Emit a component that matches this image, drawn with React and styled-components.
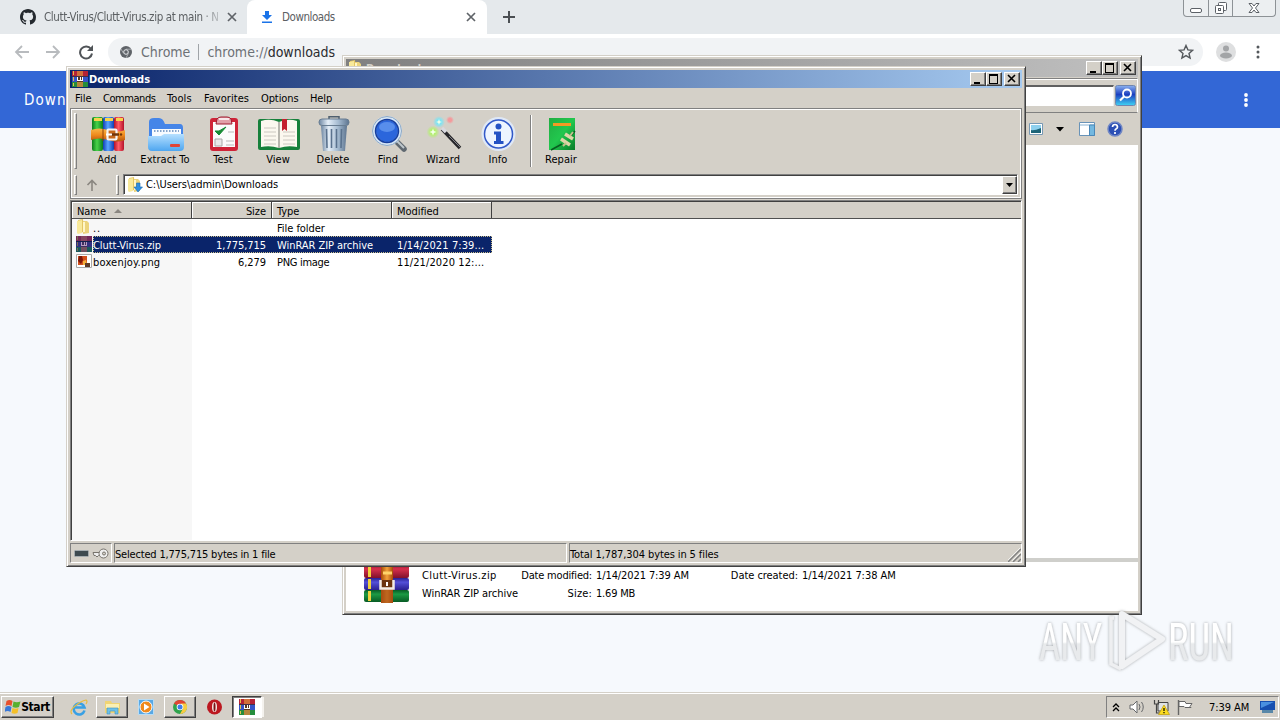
import React from "react";
import styled, { createGlobalStyle, css } from "styled-components";

const FACE = "#d4d0c8";
const TAHOMA = `"DejaVu Sans Condensed", "DejaVu Sans", sans-serif`;

const GlobalStyle = createGlobalStyle`
  * { box-sizing: border-box; }
  body { margin: 0; overflow: hidden; }
  svg { display: block; flex: none; }
`;

const Desktop = styled.div`
  position: relative;
  display: flex;
  flex-direction: column;
  width: 1280px;
  height: 720px;
  overflow: hidden;
  background: #f6f9fd;
  font-family: ${TAHOMA};
  font-stretch: condensed;
  font-size: 11px;
  line-height: 14px;
  letter-spacing: -0.05px;
  color: #000;
  white-space: nowrap;
`;

/* ---------- Chrome ---------- */
const Browser = styled.div`
  display: flex;
  flex-direction: column;
  flex: 1;
`;
const TabStrip = styled.div`
  display: flex;
  height: 34px;
  background: #e5e9ec;
  color: #5c6063;
  font-size: 11.5px;
`;
const Tab = styled.div`
  display: flex;
  align-items: center;
  height: 34px;
  width: ${(p) => p.$w}px;
  padding: 0 0 0 ${(p) => p.$pad}px;
  background: ${(p) => (p.$active ? "#fff" : "transparent")};
  border-radius: 8px 8px 0 0;
`;
const TabTitle = styled.span`
  width: ${(p) => p.$w}px;
  margin-left: ${(p) => p.$gap}px;
  letter-spacing: ${(p) => p.$ls};
  ${(p) => p.$fade && css`
    mask-image: linear-gradient(90deg, #000 88%, transparent 102%);
  `}
`;
const NewTab = styled.div`
  display: flex;
  align-items: center;
  margin-left: 15px;
`;
const ChromeControls = styled.div`
  display: flex;
  margin-left: auto;
  margin-right: 4px;
  width: 93px;
  height: 17px;
  border: 1px solid #8d9296;
  border-top: 0;
  border-radius: 0 0 4px 4px;
  background: #eceff1;
`;
const ChromeControl = styled.div`
  display: flex;
  justify-content: center;
  width: ${(p) => p.$w}px;
  border-right: ${(p) => (p.$last ? 0 : "1px solid #8d9296")};
`;
const NavBar = styled.div`
  display: flex;
  align-items: center;
  height: 37px;
  padding: 0 0 1px 14px;
  background: #fff;
`;
const NavIcons = styled.div`
  display: flex;
  gap: 15px;
  width: 94px;
`;
const Omnibox = styled.div`
  display: flex;
  align-items: center;
  width: 1095px;
  height: 28px;
  padding: 0 9px 0 12px;
  border-radius: 14px;
  background: #f1f3f5;
  color: #6d7175;
  font-size: 14px;
  letter-spacing: 0;
  b { font-weight: 400; color: #2b2c2f; }
`;
const OmniLabel = styled.span`
  margin-left: ${(p) => p.$gap}px;
`;
const OmniRule = styled.span`
  width: 1px;
  height: 16px;
  margin: 0 8px;
  background: #a0a4a8;
`;
const Push = styled.span`
  flex: 1;
`;
const Avatar = styled.div`
  margin: 0 16px 0 13px;
`;
const PageHeader = styled.div`
  display: flex;
  align-items: center;
  justify-content: space-between;
  height: 57px;
  padding: 1px 28px 0 24px;
  background: #3367d6;
  color: #fff;
  font-size: 15px;
  letter-spacing: 1.1px;
`;

/* ---------- Classic windows ---------- */
const Window = styled.div`
  position: absolute;
  left: ${(p) => p.$x}px;
  top: ${(p) => p.$y}px;
  display: flex;
  flex-direction: column;
  width: ${(p) => p.$w}px;
  height: ${(p) => p.$h}px;
  padding: 2px;
  background: ${FACE};
  border: 1px solid;
  border-color: ${FACE} #404040 #404040 ${FACE};
  box-shadow: inset 1px 1px 0 #fff, inset -1px -1px 0 #808080;
`;
const TitleBar = styled.div`
  display: flex;
  align-items: center;
  height: 18px;
  margin: 1px 1px 0;
  padding: 0 2px 0 2px;
  background: linear-gradient(90deg, ${(p) => p.$from}, ${(p) => p.$to});
  color: ${(p) => p.$color || "#fff"};
  font-weight: 700;
  letter-spacing: 0;
`;
const TitleText = styled.span`
  flex: 1;
  margin-left: ${(p) => p.$gap || 1}px;
  padding-top: 1px;
`;
const raised = css`
  border: 1px solid;
  border-color: #fff #404040 #404040 #fff;
  box-shadow: inset -1px -1px 0 #808080;
  background: ${FACE};
`;
const CaptionButton = styled.div`
  display: flex;
  align-items: center;
  justify-content: center;
  width: 16px;
  height: 14px;
  margin-left: ${(p) => p.$gap || 0}px;
  ${raised}
`;

/* ---------- Explorer ---------- */
const AddressBand = styled.div`
  display: flex;
  align-items: center;
  justify-content: flex-end;
  height: 35px;
  margin: 1px 1px 0;
  padding-right: 1px;
  border-top: 1px solid #808080;
  border-bottom: 1px solid #808080;
  border-right: 1px solid #fff;
  box-shadow: inset 0 1px 0 #fff;
`;
const SearchField = styled.div`
  width: 300px;
  height: 21px;
  background: #fff;
  border-top: 2px solid #606060;
  border-right: 1px solid #eee;
`;
const CommandBand = styled.div`
  display: flex;
  align-items: center;
  justify-content: flex-end;
  height: 32px;
  margin: 0 1px;
  padding-right: 15px;
`;
const Spacer = styled.span`
  width: ${(p) => p.$w}px;
`;
const FilePane = styled.div`
  flex: 1;
  margin: 0 1px;
  background: #fff;
`;
const DetailsPane = styled.div`
  display: flex;
  height: 53px;
  margin: 0 1px 1px;
  padding-left: 18px;
  border-top: 4px solid #cfcfcb;
  background: #fff;
`;
const DetailsArt = styled.div`
  margin-top: -3px;
`;
const DetailsGrid = styled.div`
  display: grid;
  grid-template-columns: 91px 83px 134px 72px 120px;
  grid-template-rows: 18px 18px;
  align-content: start;
  line-height: 18px;
  margin: 5px 0 0 12px;
`;
const Detail = styled.span`
  padding-right: ${(p) => (p.$right ? 4 : 0)}px;
  text-align: ${(p) => (p.$right ? "right" : "left")};
  letter-spacing: ${(p) => (p.$ls === undefined ? -0.05 : p.$ls)}px;
`;

/* ---------- WinRAR ---------- */
const MenuBar = styled.div`
  display: flex;
  align-items: center;
  height: 20px;
  margin: 0 1px;
  padding: 2px 0 0 5px;
`;
const MenuItem = styled.span`
  width: ${(p) => p.$w}px;
  letter-spacing: ${(p) => p.$ls}px;
`;
const Rebar = styled.div`
  display: flex;
  flex-direction: column;
  height: 91px;
  margin: 0 1px;
  border: 1px solid #808080;
  box-shadow: inset 1px 1px 0 #fff, inset -1px -1px 0 #fff;
`;
const ToolBand = styled.div`
  display: flex;
  align-items: center;
  height: 63px;
  padding-left: 3px;
`;
const Grip = styled.span`
  width: 3px;
  height: ${(p) => p.$h}px;
  border: 1px solid;
  border-color: #fff #808080 #808080 #fff;
`;
const Tool = styled.div`
  display: flex;
  flex-direction: column;
  align-items: center;
  width: ${(p) => p.$w}px;
  height: 54px;
  padding-top: 2px;
  letter-spacing: 0.05px;
  svg { margin: 0 0 1px 2px; }
`;
const ToolRule = styled.span`
  width: 2px;
  height: 52px;
  margin: 0 0 0 4px;
  border-left: 1px solid #808080;
  border-right: 1px solid #fff;
`;
const PathBand = styled.div`
  display: flex;
  align-items: center;
  height: 24px;
  padding: 1px 3px 0;
`;
const PathCombo = styled.div`
  display: flex;
  align-items: center;
  flex: 1;
  height: 21px;
  margin-left: 4px;
  padding: 0 0 0 3px;
  background: #fff;
  border: 1px solid #808080;
  border-right-color: #fff;
  border-bottom-color: #fff;
  box-shadow: inset 1px 1px 0 #404040;
`;
const PathText = styled.span`
  flex: 1;
  margin-left: 3px;
  padding-top: 1px;
`;
const ComboButton = styled.div`
  display: flex;
  align-items: center;
  justify-content: center;
  width: 15px;
  height: 18px;
  ${raised}
`;
const FileList = styled.div`
  display: flex;
  flex-direction: column;
  flex: 1;
  margin: 1px 1px 0;
  border: 1px solid;
  border-color: #808080 #fff #fff #808080;
  box-shadow: inset 1px 1px 0 #404040;
  padding: 1px 0 0 1px;
  background: #fff;
`;
const HeaderRow = styled.div`
  display: flex;
  height: 17px;
  background: ${FACE};
  border-bottom: 1px solid #505050;
`;
const HeaderCell = styled.div`
  display: flex;
  align-items: center;
  justify-content: ${(p) => (p.$right ? "flex-end" : "flex-start")};
  width: ${(p) => p.$w}px;
  padding: 2px 5px 0;
  line-height: 15px;
  border-right: 1px solid #404040;
  box-shadow: inset 1px 1px 0 #fff;
`;
const ListBody = styled.div`
  flex: 1;
  background: linear-gradient(90deg, #f7f7f7 120px, #fff 120px);
`;
const Row = styled.div`
  display: flex;
  height: 17px;
  padding-left: 4px;
`;
const Cells = styled.div`
  display: flex;
  align-items: center;
  height: 17px;
  width: 399px;
  margin-left: 1px;
  padding-top: 2px;
  ${(p) => p.$selected && css`
    background: #0a246a;
    color: #fff;
    outline: 1px dotted #c8bc88;
    outline-offset: -1px;
  `}
`;
const Cell = styled.span`
  width: ${(p) => p.$w}px;
  padding-left: ${(p) => p.$pad || 0}px;
  text-align: ${(p) => (p.$right ? "right" : "left")};
  letter-spacing: ${(p) => p.$ls || "inherit"};
`;
const StatusBar = styled.div`
  display: flex;
  gap: 2px;
  height: 20px;
  margin: 2px 1px 1px;
`;
const StatusCell = styled.div`
  display: flex;
  align-items: center;
  width: ${(p) => p.$w}px;
  flex: ${(p) => (p.$grow ? 1 : "none")};
  padding: ${(p) => p.$top || 0}px 0 0 ${(p) => p.$pad || 0}px;
  gap: 3px;
  letter-spacing: ${(p) => p.$ls || "inherit"};
  border: 1px solid;
  border-color: #808080 #fff #fff #808080;
`;
const StatusText = styled.span`
  padding-top: 3px;
`;
const SizeGrip = styled.span`
  padding-top: 3px;
`;

/* ---------- Taskbar ---------- */
const Taskbar = styled.div`
  display: flex;
  align-items: center;
  height: 28px;
  padding: 2px 1px 0 1px;
  background: ${FACE};
  box-shadow: inset 0 1px 0 #d4d0c8, inset 0 2px 0 #fff;
`;
const TaskButton = styled.div`
  display: flex;
  align-items: center;
  justify-content: center;
  width: ${(p) => p.$w}px;
  height: 22px;
  margin-left: ${(p) => p.$gap || 0}px;
  font-size: 12px;
  font-weight: 700;
  letter-spacing: -0.4px;
  ${(p) => !p.$flat && raised}
  ${(p) => p.$pressed && css`
    background: #fff;
    border-color: #404040 #fff #fff #404040;
    box-shadow: inset 1px 1px 0 #808080, 3px 0 0 -1px #f4f2ee;
  `}
`;
const Tray = styled.div`
  display: flex;
  align-items: center;
  width: 173px;
  height: 22px;
  margin-left: auto;
  padding-left: 5px;
  border: 1px solid;
  border-color: #808080 #fff #fff #808080;
`;
const Clock = styled.span`
  width: 51px;
  margin-left: 15px;
  padding-top: 1px;
`;
const Watermark = styled.div`
  position: absolute;
  left: 1030px;
  top: 602px;
`;

/* ---------- Drawings ---------- */
const MinGlyph = () => (
  <svg width="12" height="10" shapeRendering="crispEdges"><path d="M2 8h6v2H2z" /></svg>
);
const MaxGlyph = () => (
  <svg width="12" height="10" shapeRendering="crispEdges">
    <path d="M1 0h9v10H1zM2 2v7h7V2z" fillRule="evenodd" />
  </svg>
);
const CloseGlyph = () => (
  <svg width="12" height="10"><path d="M2 1l7 7M9 1l-7 7" stroke="#000" strokeWidth="1.6" /></svg>
);
const Captions = () => (
  <>
    <CaptionButton><MinGlyph /></CaptionButton>
    <CaptionButton><MaxGlyph /></CaptionButton>
    <CaptionButton $gap={2}><CloseGlyph /></CaptionButton>
  </>
);
const RarSmall = ({ dim, size = 16 }) => (
  <svg width={size} height={size} viewBox="0 0 16 16" shapeRendering="crispEdges">
    <path fill={dim ? "#742858" : "#b52236"} d="M0 0h16v5H0z" />
    <path fill={dim ? "#333080" : "#3554c8"} d="M0 5.5h16v5H0z" />
    <path fill={dim ? "#185a5c" : "#258d3c"} d="M0 11h16v5H0z" />
    <path fill={dim ? "#7a6a50" : "#e4c050"} d="M1 0h1v4H1zM1 6h1v4H1zM1 12h1v3H1z" />
    <path fill={dim ? "#8a4c62" : "#d8843c"} d="M5 0h6v16H5z" opacity=".8" />
    <path fill={dim ? "#403060" : "#59361f"} d="M5 5h6v6H5z" />
    <path fill="none" stroke={dim ? "#b69cc0" : "#fff"} d="M5.5 5.5v4h5v-4M8 6v3" />
    <path fill={dim ? "#10204e" : "#41314a"} d="M0 5h16v.7H0zM0 10.5h16v.7H0z" />
  </svg>
);
const FolderSmall = ({ arrow }) => (
  <svg width="16" height="16" viewBox="0 0 16 16">
    <path fill="#e4c664" d="M2 1l5-1 1 13-6 1z" />
    <path fill="#f8e99a" d="M1 2l5-1v13l-4 1-1-1z" />
    <path fill="#ecd47c" d="M7 2h4l2 2v10l-6 1z" />
    <path fill="#fff6c8" d="M7 3h2v10H7z" />
    {arrow && <path fill="#2d8ee0" stroke="#1769b0" strokeWidth=".6" d="M9.500 6h3.500v4h2.500l-4.500 5-4-5h2.500z" />}
  </svg>
);
const AddIcon = () => (
  <svg width="36" height="36" viewBox="0 0 36 36">
    <defs>
      {[["ag", "#0b7d1b", "#48d34a"], ["ab", "#123fb4", "#58a6ff"], ["ar", "#b5122a", "#ff5d68"]].map(([id, a, b]) => (
        <linearGradient id={id} key={id}>
          <stop stopColor={a} /><stop offset=".45" stopColor={b} /><stop offset="1" stopColor={a} />
        </linearGradient>
      ))}
      <linearGradient id="belt" x2="0" y2="1">
        <stop stopColor="#f9b648" /><stop offset=".5" stopColor="#f08a1c" /><stop offset="1" stopColor="#b5540c" />
      </linearGradient>
    </defs>
    <rect x="2" y="1" width="11" height="34" rx="2" fill="url(#ag)" />
    <rect x="13" y="1" width="11" height="34" rx="2" fill="url(#ab)" />
    <rect x="24" y="1" width="10" height="34" rx="2" fill="url(#ar)" />
    <path d="M4 2h8v3H4zM15 2h8v3h-8zM26 2h7v3h-7z" fill="#f7d44c" />
    <path d="M1 14q8-3 17 0t17 0v10q-8 3-17 0t-17 0z" fill="url(#belt)" />
    <path d="M13 13v12" stroke="#8c4008" />
    <rect x="17.500" y="13.500" width="9" height="10" rx="1" fill="#c8681c" stroke="#f5f5f5" strokeWidth="2.200" />
    <path d="M21 18.500h8" stroke="#70350a" strokeWidth="2.500" />
    <path d="M16 18.500h6" stroke="#fff" strokeWidth="2" />
    <circle cx="31" cy="18.500" r="1.200" fill="#70350a" />
  </svg>
);
const ExtractIcon = () => (
  <svg width="38" height="36" viewBox="0 0 38 36">
    <defs><linearGradient id="fold" x2="0" y2="1"><stop stopColor="#b6e0ff" /><stop offset="1" stopColor="#4ea6f0" /></linearGradient></defs>
    <path d="M2 6q0-4 5-4h5q4 0 6 6h15q3 0 3 4v16H2z" fill="#4585e8" />
    <path d="M5 13h29v11H5z" fill="#f7fbff" />
    <path d="M7 15h25" stroke="#84a4cc" strokeWidth="2" strokeDasharray="1.5 1.5" />
    <path d="M1 20h13l3-2h20v13q0 4-4 4H5q-4 0-4-4z" fill="url(#fold)" />
    <rect x="23" y="28" width="10" height="3" rx="1" fill="#e04438" />
  </svg>
);
const TestIcon = () => (
  <svg width="30" height="36" viewBox="0 0 30 36">
    <rect x="1" y="2" width="28" height="33" rx="3" fill="#cf2438" />
    <path d="M4 6h22v25H4z" fill="#fbfbfb" />
    <path d="M8 3q1-2 4-2h6q3 0 4 2l1 5H7z" fill="#e2a0a8" stroke="#a01c30" />
    <path d="M10 3h10" stroke="#fff" strokeWidth="1.5" />
    <path d="M6 15l4 4 7-8-7 4z" fill="#168a34" stroke="#168a34" />
    <path d="M19 16h6M17 25h8M17 29h8" stroke="#b9b9b9" />
    <path d="M6 23h7v7H6z" fill="#e9e9e9" stroke="#a9a9a9" />
  </svg>
);
const ViewIcon = () => (
  <svg width="44" height="36" viewBox="0 0 44 36">
    <rect x="1" y="3" width="42" height="31" rx="2" fill="#16803b" />
    <path d="M4 5q9-3 18 1v26q-9-3-18-1zM40 5q-9-3-18 1v26q9-3 18-1z" fill="#fbf8ef" />
    <path d="M22 6v26" stroke="#9b9b93" strokeWidth="1.4" />
    <path d="M7 12h12M7 16h12M7 20h12M7 24h12M7 28h12M26 16h12M26 20h12M26 24h12M26 28h12" stroke="#cbc8c0" />
    <path d="M25 3h5v12l-2.500-2-2.500 2z" fill="#c4202e" />
  </svg>
);
const DeleteIcon = () => (
  <svg width="32" height="36" viewBox="0 0 32 36">
    <defs><linearGradient id="can"><stop stopColor="#6d86a2" /><stop offset=".3" stopColor="#e4eef8" /><stop offset=".65" stopColor="#a4bad0" /><stop offset="1" stopColor="#5d748f" /></linearGradient></defs>
    <path d="M11 3V.800h10V3" fill="none" stroke="#50606f" strokeWidth="1.500" />
    <path d="M3 10h26l-2 25H5z" fill="url(#can)" />
    <path d="M8.500 13l.5 19M13.500 13v19M18.500 13v19M23.500 13l-.5 19" stroke="#5a728e" strokeWidth="1.600" />
    <rect x="1" y="3" width="30" height="6.500" rx="3" fill="url(#can)" stroke="#687d92" />
  </svg>
);
const FindIcon = () => (
  <svg width="36" height="36" viewBox="0 0 36 36">
    <path d="M25 25l8 8" stroke="#5f6870" strokeWidth="5.500" strokeLinecap="round" />
    <path d="M26 25l7 7" stroke="#bfc7cc" strokeWidth="2" />
    <circle cx="16" cy="15" r="13" fill="#2b66dc" stroke="#d5e5f5" strokeWidth="4" />
    <circle cx="16" cy="15" r="14.500" fill="none" stroke="#8da8c4" />
    <circle cx="16" cy="15" r="11.500" fill="none" stroke="#163e9d" strokeWidth="1.500" />
    <ellipse cx="16" cy="11" rx="8" ry="5" fill="#85b5fb" opacity=".5" />
  </svg>
);
const WizardIcon = () => (
  <svg width="38" height="36" viewBox="0 0 38 36">
    <defs>
      {[["wg", "#b4f070"], ["wc", "#7ce4f4"], ["wr", "#f49a9c"]].map(([id, c]) => (
        <radialGradient id={id} key={id}><stop stopColor={c} /><stop offset=".4" stopColor={c} /><stop offset="1" stopColor={c} stopOpacity="0" /></radialGradient>
      ))}
    </defs>
    <path d="M17 13l18 19" stroke="#26262a" strokeWidth="3.500" />
    <path d="M17 12l4 4" stroke="#d9d9df" strokeWidth="3.500" />
    <path d="M24 20l11 11" stroke="#85858b" />
    <circle cx="8" cy="16" r="6.500" fill="url(#wg)" />
    <circle cx="14" cy="6" r="6" fill="url(#wc)" />
    <circle cx="25" cy="4" r="4" fill="url(#wr)" />
    <path d="M8 12.500l1 2.500 2.500 1L9 17l-1 2.500L7 17l-2.500-1L7 15zM14 3l.8 2.200L17 6l-2.200.800L14 9l-.8-2.200L11 6l2.200-.8z" fill="#f2ffe8" />
  </svg>
);
const InfoIcon = () => (
  <svg width="36" height="36" viewBox="0 0 36 36">
    <circle cx="17.500" cy="18" r="17" fill="#dfe8f6" />
    <circle cx="17.500" cy="18" r="14" fill="#edf4ff" stroke="#3158c8" strokeWidth="1.500" />
    <circle cx="17.500" cy="10.500" r="3" fill="#2452c4" />
    <path d="M13 15.500h7V25h2.500v3H13v-3h2v-6.500h-2z" fill="#2452c4" />
  </svg>
);
const RepairIcon = () => (
  <svg width="28" height="36" viewBox="0 0 28 36">
    <defs><linearGradient id="rep" x2="1" y2="1"><stop stopColor="#20ad42" /><stop offset=".5" stopColor="#22c74e" /><stop offset="1" stopColor="#087b28" /></linearGradient></defs>
    <path d="M1 2h26v32H1z" fill="url(#rep)" />
    <path d="M5 8.500h18" stroke="#f39a24" strokeWidth="3" />
    <path d="M3 34l11-6M22 21l5-6" stroke="#075c20" strokeWidth="1.500" />
    <path d="M13 23l9 6M17 18l8 5" stroke="#ddd6a8" strokeWidth="3.500" />
    <path d="M15 30l3-3M22 20l3-4" stroke="#c4c08c" strokeWidth="2" />
  </svg>
);
const BooksIcon = () => (
  <svg width="46" height="45" viewBox="0 0 46 45">
    <defs>
      {[["hr", "#d8304c", "#80102c"], ["hb", "#5450d8", "#2a1f90"], ["hg", "#1c9a44", "#085c25"]].map(([id, a, b]) => (
        <linearGradient id={id} key={id} x2="0" y2="1"><stop stopColor={b} /><stop offset=".35" stopColor={a} /><stop offset="1" stopColor={b} /></linearGradient>
      ))}
      <linearGradient id="strap"><stop stopColor="#a84a08" /><stop offset=".5" stopColor="#f3a33c" /><stop offset="1" stopColor="#a84a08" /></linearGradient>
    </defs>
    <rect x="0" y="5" width="45" height="14" rx="2" fill="url(#hr)" />
    <rect x="0" y="19" width="45" height="12" rx="2" fill="url(#hb)" />
    <rect x="0" y="31" width="45" height="12" rx="2" fill="url(#hg)" />
    <path d="M5.500 6v12M5.500 20v10M5.500 32v10" stroke="#f1d23c" strokeWidth="3" />
    <path d="M17 3h12v41H17z" fill="url(#strap)" />
    <path d="M17 30h12v14H17z" fill="#a84e14" opacity=".7" />
    <path d="M16.500 21v8.500h13V21" fill="#6b3410" stroke="#f2ece6" strokeWidth="2.500" />
    <path d="M23 23v4" stroke="#fff" strokeWidth="2" />
    <path d="M19 14h9" stroke="#ffd46a" strokeWidth="3" />
  </svg>
);
const ImageSmall = () => (
  <svg width="16" height="16" viewBox="0 0 16 16">
    <path d="M.5 1.500h15v13H.5z" fill="#fff" stroke="#a9a9a9" />
    <path d="M2 3h9v9H2z" fill="#d4501c" />
    <path d="M3 3h3l1 4-2 4-3-3z" fill="#7d1608" /><path d="M7 8l3-1 1 5H7z" fill="#f3b03a" />
    <path d="M9 10h5v4H9z" fill="#5c3a28" />
  </svg>
);
const GithubLogo = () => (
  <svg width="16" height="16" viewBox="0 0 16 16">
    <path fill="#24292e" d="M8 0C3.580 0 0 3.580 0 8c0 3.540 2.290 6.530 5.470 7.590.4.070.55-.17.55-.38 0-.19-.01-.82-.01-1.490-2.010.37-2.530-.49-2.690-.94-.09-.23-.48-.94-.82-1.130-.28-.15-.68-.52-.01-.53.63-.01 1.080.58 1.230.82.72 1.210 1.870.87 2.330.66.07-.52.28-.87.51-1.070-1.780-.2-3.640-.89-3.640-3.950 0-.87.31-1.590.82-2.150-.08-.2-.36-1.020.08-2.120 0 0 .67-.21 2.200.82.64-.18 1.320-.27 2-.27s1.360.09 2 .27c1.530-1.040 2.200-.82 2.200-.82.44 1.100.16 1.920.08 2.120.51.56.82 1.270.82 2.150 0 3.070-1.870 3.750-3.650 3.950.29.25.54.73.54 1.480 0 1.070-.01 1.930-.01 2.200 0 .21.15.46.55.38A8.010 8.010 0 0 0 16 8c0-4.420-3.580-8-8-8z" />
  </svg>
);
const TabClose = () => (
  <svg width="10" height="10" viewBox="0 0 10 10"><path d="M1 1l8 8M9 1L1 9" stroke="#5f6368" strokeWidth="1.7" /></svg>
);
const Dots = ({ color, r = 1.5 }) => (
  <svg width="12" height="16" viewBox="0 0 12 16" fill={color}>
    <circle cx="6" cy="3" r={r} /><circle cx="6" cy="8" r={r} /><circle cx="6" cy="13" r={r} />
  </svg>
);

const tools = [
  ["Add", 54, AddIcon], ["Extract To", 62, ExtractIcon], ["Test", 54, TestIcon], ["View", 56, ViewIcon],
  ["Delete", 54, DeleteIcon], ["Find", 56, FindIcon], ["Wizard", 54, WizardIcon], ["Info", 56, InfoIcon],
];
const menus = [["File", 28, 0], ["Commands", 64, -0.45], ["Tools", 37, 0.1], ["Favorites", 57, 0.05], ["Options", 49, -0.1], ["Help", 30, -0.1]];
const files = [
  { icon: <FolderSmall />, name: "..", size: "", type: "File folder", date: "", nameLs: "0.8px" },
  { icon: <RarSmall dim />, name: "Clutt-Virus.zip", size: "1,775,715", type: "WinRAR ZIP archive", date: "1/14/2021 7:39...", selected: true },
  { icon: <ImageSmall />, name: "boxenjoy.png", size: "6,279", type: "PNG image", date: "11/21/2020 12:...", nameLs: "0.2px", typeLs: "-0.3px" },
];

function BrowserWindow() {
  return (
    <Browser>
      <TabStrip>
        <Tab $w={247} $pad={20}>
          <GithubLogo />
          <TabTitle $w={178} $gap={8} $ls="-0.38px" $fade>Clutt-Virus/Clutt-Virus.zip at main · N</TabTitle>
          <Spacer $w={5} />
          <TabClose />
        </Tab>
        <Tab $w={240} $pad={14} $active>
          <svg width="12" height="14" viewBox="0 0 12 14"><path d="M4 1h4v4h3L6 10 1 5h3zM1 11.500h10V13H1z" fill="#1a73e8" /></svg>
          <TabTitle $w={178} $gap={9} $ls="-0.45px">Downloads</TabTitle>
          <Spacer $w={6} />
          <TabClose />
        </Tab>
        <NewTab>
          <svg width="14" height="14" viewBox="0 0 14 14"><path d="M7 1v12M1 7h12" stroke="#4b4f53" strokeWidth="2" /></svg>
        </NewTab>
        <ChromeControls>
          <ChromeControl $w={25}><svg width="14" height="16"><rect x="1.500" y="8.500" width="11" height="4" rx="1.500" fill="#fff" stroke="#5c6167" /></svg></ChromeControl>
          <ChromeControl $w={25}><svg width="14" height="16" fill="#fff" stroke="#5c6167"><rect x="4.500" y="2.500" width="8" height="8" rx="1" /><rect x="1.500" y="5.500" width="8" height="8" rx="1" /><rect x="4.500" y="8.500" width="2" height="2" /></svg></ChromeControl>
          <ChromeControl $w={42} $last><svg width="14" height="16"><path d="M2 3.500h3l2 2.500 2-2.500h3L8.500 8l3.500 4.500H9L7 10l-2 2.500H2L5.500 8z" fill="#fff" stroke="#5c6167" /></svg></ChromeControl>
        </ChromeControls>
      </TabStrip>
      <NavBar>
        <NavIcons>
          <svg width="16" height="16" viewBox="0 0 16 16" fill="none" stroke="#b8bbbe" strokeWidth="1.800"><path d="M15 8H2M8 2L2 8l6 6" /></svg>
          <svg width="16" height="16" viewBox="0 0 16 16" fill="none" stroke="#b8bbbe" strokeWidth="1.800"><path d="M1 8h13M8 2l6 6-6 6" /></svg>
          <svg width="18" height="16" viewBox="-1 0 18 16"><path d="M14 5A6 6 0 1 0 15 9.500" fill="none" stroke="#505458" strokeWidth="2" /><path d="M16 1v6h-6z" fill="#505458" /></svg>
        </NavIcons>
        <Omnibox>
          <svg width="12" height="12" viewBox="0 0 12 12"><circle cx="6" cy="6" r="6" fill="#5f6368" /><circle cx="6" cy="6" r="2.300" fill="#5f6368" stroke="#e8eaed" strokeWidth="1" /><path d="M6 3.200h5.200M3.500 7.300L1 3M8.400 7.400L6 12" stroke="#c8cbce" strokeWidth=".7" /></svg>
          <OmniLabel $gap={9}>Chrome</OmniLabel>
          <OmniRule />
          <OmniLabel>chrome://<b>downloads</b></OmniLabel>
          <Push />
          <svg width="16" height="16" viewBox="0 0 16 16"><path d="M8 1.500l1.900 4.400 4.700.4-3.600 3.100 1.100 4.700L8 11.600l-4.100 2.500L5 9.400 1.400 6.300l4.700-.4z" fill="none" stroke="#54585c" strokeWidth="1.400" /></svg>
        </Omnibox>
        <Avatar>
          <svg width="20" height="20" viewBox="0 0 20 20"><circle cx="10" cy="10" r="10" fill="#dedfe0" /><circle cx="10" cy="6.500" r="3" fill="#a3a5a7" /><ellipse cx="10" cy="13.500" rx="6" ry="3" fill="#a3a5a7" /></svg>
        </Avatar>
        <Dots color="#54585c" />
      </NavBar>
      <PageHeader>
        Downloads
        <Dots color="#fff" r={1.9} />
      </PageHeader>
    </Browser>
  );
}

function ExplorerWindow() {
  return (
    <Window $x={342} $y={55} $w={800} $h={560}>
      <TitleBar $from="#808080" $to="#c0c0c0" $color="#d4d0c8">
        <FolderSmall />
        <TitleText $gap={2}>Downloads</TitleText>
        <Captions />
      </TitleBar>
      <AddressBand>
        <SearchField />
        <Spacer $w={1} />
        <svg width="21" height="21" viewBox="0 0 21 21">
          <defs><linearGradient id="sb" x2="0" y2="1"><stop stopColor="#8cb2f0" /><stop offset=".45" stopColor="#1c3fc0" /><stop offset="1" stopColor="#40d4f4" /></linearGradient></defs>
          <rect x=".5" y=".5" width="20" height="20" rx="2" fill="url(#sb)" stroke="#7086b0" />
          <circle cx="12" cy="8.500" r="4" fill="none" stroke="#fff" strokeWidth="1.800" /><path d="M9 11.500L5 15.500" stroke="#fff" strokeWidth="2.200" />
        </svg>
      </AddressBand>
      <CommandBand>
        <svg width="14" height="12" viewBox="0 0 14 12"><path d="M.5.5h13v11H.5z" fill="#fff" stroke="#7798b4" /><path d="M2 2h10v8H2z" fill="#8ed0ee" /><path d="M2 7q3 1 10-2v5H2z" fill="#1c6478" /></svg>
        <Spacer $w={13} />
        <svg width="8" height="5"><path d="M0 0h8L4 4.500z" /></svg>
        <Spacer $w={15} />
        <svg width="16" height="14" viewBox="0 0 16 14"><path d="M.5.5h15v13H.5z" fill="#fff" stroke="#6993b8" /><path d="M1 3h14" stroke="#8ab2d2" /><path d="M10.500 3h5v10.500h-5z" fill="#73b8e0" stroke="#4a88b8" /></svg>
        <Spacer $w={12} />
        <svg width="16" height="16" viewBox="0 0 16 16"><circle cx="8" cy="8" r="7" fill="#2b4fb5" stroke="#6f86c4" strokeWidth="1.500" /><path d="M5.500 6q.2-2.500 2.500-2.500T10.500 6q0 1.300-1.500 2-1 .5-1 1.800M8 11v2" fill="none" stroke="#fff" strokeWidth="1.700" /></svg>
      </CommandBand>
      <FilePane />
      <DetailsPane>
        <DetailsArt><BooksIcon /></DetailsArt>
        <DetailsGrid>
          <Detail $ls={0.4}>Clutt-Virus.zip</Detail>
          <Detail $right $ls={-0.2}>Date modified:</Detail>
          <Detail $ls={-0.1}>1/14/2021 7:39 AM</Detail>
          <Detail $right>Date created:</Detail>
          <Detail>1/14/2021 7:38 AM</Detail>
          <Detail>WinRAR ZIP archive</Detail>
          <Detail $right $ls={0.15}>Size:</Detail>
          <Detail $ls={-0.2}>1.69 MB</Detail>
        </DetailsGrid>
      </DetailsPane>
    </Window>
  );
}

function WinRarWindow() {
  return (
    <Window $x={66} $y={66} $w={960} $h={501}>
      <TitleBar $from="#0a246a" $to="#a6caf0">
        <RarSmall />
        <TitleText>Downloads</TitleText>
        <Captions />
      </TitleBar>
      <MenuBar>{menus.map(([m, w, ls]) => <MenuItem key={m} $w={w} $ls={ls}>{m}</MenuItem>)}</MenuBar>
      <Rebar>
        <ToolBand>
          <Grip $h={56} />
          <Spacer $w={3} />
          {tools.map(([label, w, Icon]) => (
            <Tool key={label} $w={w}><Icon />{label}</Tool>
          ))}
          <ToolRule />
          <Tool $w={58}><RepairIcon />Repair</Tool>
        </ToolBand>
        <PathBand>
          <Grip $h={20} />
          <Spacer $w={9} />
          <svg width="12" height="12" viewBox="0 0 12 12"><path d="M6 12V2M1.500 6L6 1.500 10.500 6" fill="none" stroke="#8a8680" strokeWidth="1.600" /></svg>
          <Spacer $w={18} />
          <Grip $h={20} />
          <PathCombo>
            <FolderSmall arrow />
            <PathText>C:\Users\admin\Downloads</PathText>
            <ComboButton><svg width="7" height="4"><path d="M0 0h7L3.500 4z" /></svg></ComboButton>
          </PathCombo>
        </PathBand>
      </Rebar>
      <FileList>
        <HeaderRow>
          <HeaderCell $w={120}>Name<Spacer $w={8} /><svg width="8" height="4"><path d="M0 4h8L4 0z" fill="#8a8680" /></svg></HeaderCell>
          <HeaderCell $w={80} $right>Size</HeaderCell>
          <HeaderCell $w={120}>Type</HeaderCell>
          <HeaderCell $w={100}>Modified</HeaderCell>
        </HeaderRow>
        <ListBody>
          {files.map((f) => (
            <Row key={f.name}>
              {f.icon}
              <Cells $selected={f.selected}>
                <Cell $w={99} $ls={f.nameLs}>{f.name}</Cell>
                <Cell $w={74} $right>{f.size}</Cell>
                <Cell $w={131} $pad={11} $ls={f.typeLs}>{f.type}</Cell>
                <Cell $w={90} $ls="0.1px">{f.date}</Cell>
              </Cells>
            </Row>
          ))}
        </ListBody>
      </FileList>
      <StatusBar>
        <StatusCell $w={42} $pad={3} $top={1}>
          <svg width="15" height="7"><rect x=".5" y=".5" width="14" height="6" rx="1" fill="#3d4a50" stroke="#a4acb0" /></svg>
          <svg width="17" height="11" viewBox="0 0 17 11" fill="#eee" stroke="#77736c"><path d="M1 4.500h8v3H6.500L5 9 3.500 7.500H2z" /><circle cx="11.500" cy="5.500" r="4.500" /><circle cx="12" cy="5.500" r="1.500" fill="#d4d0c8" /></svg>
        </StatusCell>
        <StatusCell $w={453} $ls="-0.18px">
          <StatusText>Selected 1,775,715 bytes in 1 file</StatusText>
        </StatusCell>
        <StatusCell $grow $ls="-0.1px">
          <StatusText>Total 1,787,304 bytes in 5 files</StatusText>
          <Push />
          <SizeGrip>
            <svg width="13" height="15" viewBox="0 0 13 15"><path d="M0 15L13 2M5 15l8-8M10 15l3-3" stroke="#808080" strokeWidth="1.500" /><path d="M-1 14L12 1M4 14l9-9" stroke="#fff" strokeWidth=".7" /></svg>
          </SizeGrip>
        </StatusCell>
      </StatusBar>
    </Window>
  );
}

function TaskbarStrip() {
  return (
    <Taskbar>
      <TaskButton $w={53}>
        <svg width="16" height="16" viewBox="1.500 0 16 16"><path d="M3 2q3-2 6 0L8 7Q5 5 2 7z" fill="#e8502c" /><path d="M10 2.500q3 1.500 7 0L15.500 8q-3 1.500-6.500 0z" fill="#58b030" /><path d="M2 8q3-2 6 0l-1 5q-3-2-6 0z" fill="#3878d8" /><path d="M9 9q3 1.500 6 0l-1 5q-3 1.500-6 0z" fill="#f4c028" /></svg>
        Start
      </TaskButton>
      <TaskButton $flat $w={24} $gap={13}>
        <svg width="18" height="18" viewBox="0 0 18 18"><path d="M14.500 12.500A5.500 5.500 0 1 1 14.500 9.500H5" fill="none" stroke="#38a0e4" strokeWidth="2.600" /><path d="M2 16Q-1 13 5 8T16 2q2 1 0 4" fill="none" stroke="#e8bc40" strokeWidth="1.200" /></svg>
      </TaskButton>
      <TaskButton $w={32} $gap={5}>
        <svg width="17" height="16" viewBox="0 0 17 16"><path d="M1 2h6l1 2h8v10H1z" fill="#f0d474" /><path d="M2 5h13v4H2z" fill="#fbf0b4" /><path d="M3 15V9h11v6h-3v-3H6v3z" fill="#6dc0e8" stroke="#3c90c0" strokeWidth=".6" /></svg>
      </TaskButton>
      <TaskButton $flat $w={24} $gap={6}>
        <svg width="16" height="16" viewBox="0 0 16 16"><path d="M.5.5h15v15H.5z" fill="#58a8e4" stroke="#b8dcf4" /><circle cx="8" cy="8" r="6" fill="#f08a1c" stroke="#fff" /><path d="M6 4.500v7L11.500 8z" fill="#fff" /></svg>
      </TaskButton>
      <TaskButton $w={32} $gap={6}>
        <svg width="14" height="14" viewBox="0 0 14 14"><circle cx="7" cy="7" r="7" fill="#2fa34c" /><path d="M7 7L.9 3.500A7 7 0 0 1 13.100 3.500z" fill="#e04434" /><path d="M13.100 3.500A7 7 0 0 1 7 14l3-5.500-2-5z" fill="#f8cc40" /><circle cx="7" cy="7" r="3.300" fill="#fff" /><circle cx="7" cy="7" r="2.500" fill="#3e7ce8" /></svg>
      </TaskButton>
      <TaskButton $flat $w={20} $gap={8}>
        <svg width="15" height="16" viewBox="0 0 15 16"><circle cx="7.500" cy="8" r="7.500" fill="#bc1820" /><ellipse cx="7.500" cy="8" rx="2.500" ry="5" fill="#f5e6e2" /><ellipse cx="7.500" cy="8" rx="1" ry="4.500" fill="#7a1014" /></svg>
      </TaskButton>
      <TaskButton $w={30} $gap={8} $pressed><RarSmall /></TaskButton>
      <Tray>
        <svg width="8" height="9" viewBox="0 0 8 9" fill="none" stroke="#000" strokeWidth="1.300"><path d="M1 4l3-3 3 3M1 8l3-3 3 3" /></svg>
        <Spacer $w={9} />
        <svg width="17" height="14" viewBox="0 0 17 14" fill="none" stroke="#66686a"><path d="M1 5h3l4-4v12L4 9H1z" fill="#fff" /><path d="M10 4q2 3 0 6M12.500 2q3.500 5 0 10" /></svg>
        <Spacer $w={7} />
        <svg width="17" height="16" viewBox="0 0 17 16"><path d="M5 3.500h10V12H5z" fill="#dfe2e4" stroke="#444" /><path d="M1.500 1v4h4V1M3.500 5v9h4" fill="none" stroke="#444" strokeWidth="1.200" /><path d="M11 6l5.500 9.500H5.500z" fill="#fcdc20" stroke="#c09c00" strokeWidth=".7" /><path d="M11 9v3M11 13v1.200" stroke="#000" strokeWidth="1.200" /></svg>
        <Spacer $w={7} />
        <svg width="17" height="15" viewBox="0 0 17 15"><path d="M1.500 0v15" stroke="#666" strokeWidth="1.400" /><path d="M2 1.500h6l1 2h6l-2 3 1 1H8l-1-1H2z" fill="#fff" stroke="#666" /></svg>
        <Clock>7:39 AM</Clock>
        <svg width="15" height="12" viewBox="0 0 15 12"><path d="M0 0h15v9H0z" fill="#174fb0" /><path d="M1 1h13L1 7z" fill="#4a90e0" /><path d="M2 9h11v3H2z" fill="#5887a8" /></svg>
      </Tray>
    </Taskbar>
  );
}

export default function App() {
  return (
    <Desktop>
      <GlobalStyle />
      <BrowserWindow />
      <TaskbarStrip />
      <ExplorerWindow />
      <WinRarWindow />
      <Watermark>
        <svg width="214" height="76" viewBox="0 0 214 76" fontFamily="Roboto, sans-serif" fontSize="52" fontWeight="400">
          <defs>
            <linearGradient id="wm" gradientUnits="userSpaceOnUse" x1="0" y1="20" x2="0" y2="60"><stop stopColor="#fff" /><stop offset=".5" stopColor="#fff" /><stop offset=".55" stopColor="#e8eaec" /><stop offset="1" stopColor="#e8eaec" /></linearGradient>
            <filter id="glow" x="-10%" y="-10%" width="120%" height="120%"><feDropShadow dx="0" dy="0" stdDeviation="1.500" floodColor="#85888b" floodOpacity=".75" /></filter>
          </defs>
          <g filter="url(#glow)" fill="url(#wm)">
            <text x="9" y="58" textLength="63" lengthAdjust="spacingAndGlyphs" letterSpacing="0">ANY</text>
            <text x="138" y="58" textLength="66" lengthAdjust="spacingAndGlyphs" letterSpacing="0">RUN</text>
            <path d="M84 16h-3v46l10 5" fill="none" stroke="#eeeff1" strokeWidth="3.500" />
            <path d="M92 12l40 25-40 27z" fill="none" stroke="#f1f2f4" strokeWidth="6" strokeLinejoin="round" />
          </g>
        </svg>
      </Watermark>
    </Desktop>
  );
}
